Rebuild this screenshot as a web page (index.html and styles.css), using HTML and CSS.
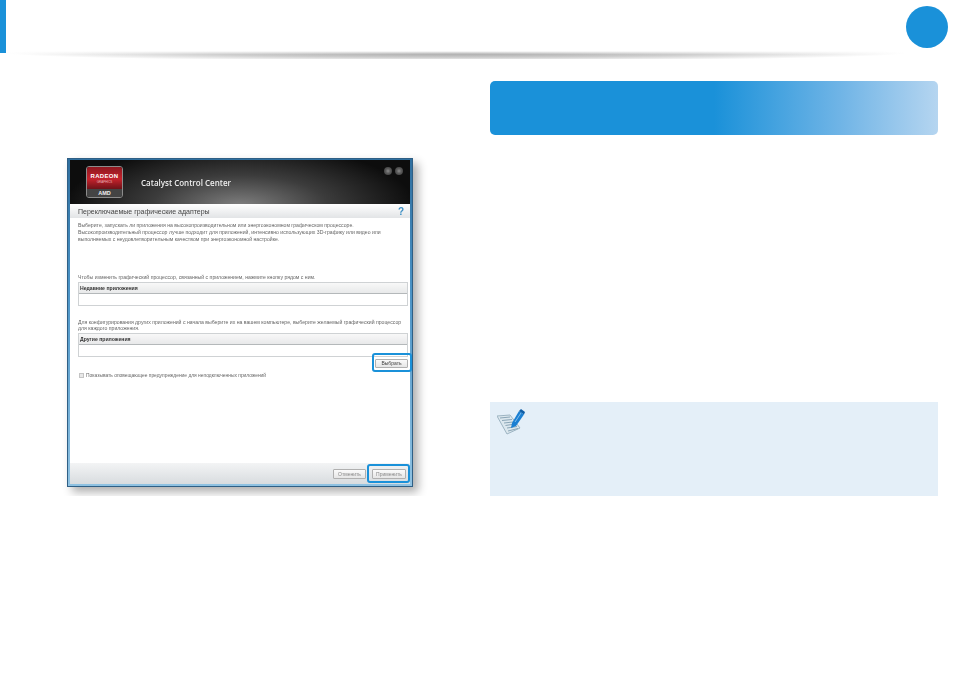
FILE: index.html
```html
<!DOCTYPE html>
<html lang="ru">

<head>
    <meta charset="UTF-8">
    <title>Catalyst Control Center</title>
    <link rel="stylesheet" href="styles.css">
</head>

<body>
    <div class="header">
        <div class="accent"></div>
        <div class="badge"></div>
    </div>
    <div class="header-shadow"></div>

    <div class="main">
        <div class="left">
            <div class="window">
                <div class="win-top">
                    <div class="logo">
                        <div class="logo-red">
                            <span class="logo-name">RADEON</span>
                            <span class="logo-sub">GRAPHICS</span>
                        </div>
                        <div class="logo-amd">AMD</div>
                    </div>
                    <div class="win-title">Catalyst Control Center</div>
                    <div class="win-controls">
                        <span class="win-dot"></span>
                        <span class="win-dot"></span>
                    </div>
                </div>
                <div class="win-head">
                    <span>Переключаемые графические адаптеры</span>
                    <span class="help">?</span>
                </div>
                <div class="win-body">
                    <p class="intro">Выберите, запускать ли приложения на высокопроизводительном или энергоэкономном графическом процессоре.<br>Высокопроизводительный процессор лучше подходит для приложений, интенсивно использующих 3D-графику или видео или<br>выполняемых с неудовлетворительным качеством при энергоэкономной настройке.</p>
                    <p class="line-one">Чтобы изменить графический процессор, связанный с приложением, нажмите кнопку рядом с ним.</p>
                    <div class="table">
                        <div class="table-head">Недавние приложения</div>
                        <div class="table-row"></div>
                    </div>
                    <p class="line-two">Для конфигурирования других приложений с начала выберите их на вашем компьютере, выберите желаемый графический процессор<br>для каждого приложения.</p>
                    <div class="table">
                        <div class="table-head">Другие приложения</div>
                        <div class="table-row"></div>
                    </div>
                    <div class="pick-row">
                        <button class="win-btn pick">Выбрать</button>
                    </div>
                    <label class="check-row"><span class="check"></span>Показывать оповещающее предупреждение для неподключенных приложений</label>
                </div>
                <div class="win-foot">
                    <button class="win-btn off">Отменить</button>
                    <button class="win-btn off apply">Применить</button>
                </div>
            </div>
        </div>

        <div class="right">
            <div class="banner"></div>
            <div class="note">
                <svg class="note-icon" width="30" height="30" viewBox="0 0 30 30">
                    <path d="M0 8 L13 7 L23 20 L10 26 Z" fill="#dbe7ee" stroke="#9db4c2" stroke-width="1"/>
                    <path d="M3 10 L13 9 M5 12.500 L15 11.500 M7 15 L16 14 M8.500 17.500 L18 16 M10 20 L20 18.500 M11 23 L21 20.500" stroke="#8aa5b6" stroke-width="1" fill="none"/>
                    <path d="M15 15 L22 3 L27 6.500 L19 18 L14 20 Z" fill="#1a7fd2"/>
                    <path d="M22 3 L24 1 L28 4 L27 6.500 Z" fill="#0d5da6"/>
                    <path d="M18 14 L24 5" stroke="#7fbdec" stroke-width="1" fill="none"/>
                </svg>
            </div>
        </div>
    </div>
</body>

</html>
```

FILE: styles.css
```css
body {
    margin: 0;
    background-color: #fff;
    font-family: 'Liberation Sans', Arial, sans-serif;
    color: #222;
}

/* page header */
.header {
    display: flex;
    justify-content: space-between;
    align-items: flex-start;
    height: 51px;
}

.accent {
    width: 6px;
    height: 53px;
    background-color: #1a91d9;
}

.badge {
    width: 42px;
    height: 42px;
    margin: 6px 6px 0 0;
    border-radius: 50%;
    background-color: #1a91d9;
}

.header-shadow {
    height: 8px;
    margin: 0 48px 0 6px;
    background:
        linear-gradient(to bottom, #fff 0, rgba(255, 255, 255, 0) 45%),
        radial-gradient(ellipse 50% 100% at 50% 25%, #a4a4a4 0%, #cdcdcd 55%, rgba(255, 255, 255, 0) 100%);
}

.main {
    display: flex;
    align-items: flex-start;
}

.left {
    padding: 99px 0 0 67px;
}

.right {
    display: flex;
    flex-direction: column;
    gap: 267px;
    width: 448px;
    margin-left: 77px;
    padding-top: 22px;
}

/* screenshot of the settings window */
.window {
    display: flex;
    flex-direction: column;
    width: 340px;
    height: 324px;
    padding: 1px 2px 2px;
    border: 1px solid #2f5f85;
    background: linear-gradient(to bottom, #2f6f9f 0%, #4a93c6 40%, #8fc2e2 100%);
    box-shadow: 5px 5px 9px rgba(0, 0, 0, 0.32);
    filter: blur(0.35px);
}

.win-top {
    display: flex;
    align-items: center;
    height: 44px;
    padding: 0 7px 0 16px;
    background: radial-gradient(ellipse 175px 62px at 50% 105%, #808080 0%, #3c3c3c 50%, #0d0d0d 100%);
}

.logo {
    display: flex;
    flex-direction: column;
    width: 35px;
    height: 30px;
    border: 1px solid #8c8c8c;
    border-radius: 3px;
    overflow: hidden;
    text-align: center;
}

.logo-red {
    display: flex;
    flex-direction: column;
    justify-content: center;
    flex: 1;
    background: linear-gradient(to bottom, #8e1820, #c4222c 55%, #6d1218);
    color: #fff;
}

.logo-name {
    font-size: 6px;
    font-weight: bold;
    line-height: 7px;
    letter-spacing: 0.3px;
}

.logo-sub {
    font-size: 3px;
    line-height: 4px;
    color: #e6b5b8;
}

.logo-amd {
    height: 8px;
    background-color: #444;
    color: #eee;
    font-size: 5.500px;
    font-weight: bold;
    line-height: 8px;
}

.win-title {
    margin-left: 18px;
    color: #eee;
    font-family: 'Open Sans', sans-serif;
    font-size: 8px;
    font-weight: 600;
}

.win-controls {
    display: flex;
    align-self: flex-start;
    gap: 3px;
    margin: 7px 0 0 auto;
}

.win-dot {
    width: 8px;
    height: 8px;
    border-radius: 50%;
    background: radial-gradient(circle, #8c8c8c 0%, #5c5c5c 40%, #333 100%);
}

.win-head {
    display: flex;
    justify-content: space-between;
    align-items: center;
    height: 14px;
    padding: 0 6px 0 8px;
    background: linear-gradient(to bottom, #fff, #e2e4e6);
    color: #444;
    font-size: 7px;
}

.help {
    color: #3d8fc4;
    font-size: 10px;
    font-weight: bold;
}

.win-body {
    flex: 1;
    padding: 0 2px 0 8px;
    background-color: #fff;
    color: #666;
    font-size: 5.150px;
    line-height: 7px;
}

.win-body p {
    margin: 0;
    white-space: nowrap;
}

.intro {
    padding-top: 4px;
}

.win-body .line-one {
    padding-top: 31px;
}

.win-body .line-two {
    padding: 13px 0 1px;
    line-height: 6px;
}

.table {
    margin-top: 1px;
    border: 1px solid #cfd2d4;
    color: #333;
}

.table-head {
    height: 10px;
    border-bottom: 1px solid #b4b8ba;
    padding-left: 1px;
    background: linear-gradient(to bottom, #f8f8f8, #e8e9ea);
    font-weight: bold;
    line-height: 10px;
}

.table-row {
    height: 11px;
}

.pick-row {
    display: flex;
    justify-content: flex-end;
    padding-top: 2px;
}

.win-btn {
    position: relative;
    height: 9px;
    width: 33px;
    padding: 0;
    border: 1px solid #b0b0b0;
    border-radius: 1px;
    background: linear-gradient(to bottom, #fafafa, #e6e6e6);
    color: #444;
    font-family: inherit;
    font-size: 5px;
    line-height: 7px;
}

.win-btn.off {
    height: 10px;
    color: #888;
}

/* blue frames drawn round a control */
.pick::after,
.apply::after {
    content: "";
    position: absolute;
    border: 2px solid #1a91d9;
    border-radius: 3px;
}

.pick::after {
    inset: -7px -5px -5px -4px;
}

.apply {
    width: 34px;
}

.apply::after {
    inset: -6px -5px -5px -6px;
}

.check-row {
    display: flex;
    align-items: center;
    gap: 2px;
    margin: 4px 0 0 1px;
    font-size: 4.900px;
}

.check {
    width: 5px;
    height: 5px;
    border: 1px solid #c4c4c4;
    background-color: #e8e8e8;
    box-sizing: border-box;
}

.win-foot {
    display: flex;
    justify-content: flex-end;
    gap: 6px;
    height: 21px;
    padding: 6px 4px 0 0;
    box-sizing: border-box;
    background: linear-gradient(to bottom, #f3f4f5, #d8dcdf);
}

/* right column */
.banner {
    height: 54px;
    border-radius: 5px;
    background: linear-gradient(to right, #1a91d9 0%, #1a91d9 50%, #6fb4e6 78%, #b5d5f0 100%);
}

.note {
    height: 94px;
    background-color: #e4eff8;
}

.note-icon {
    display: block;
    margin: 6px 0 0 7px;
}
```
